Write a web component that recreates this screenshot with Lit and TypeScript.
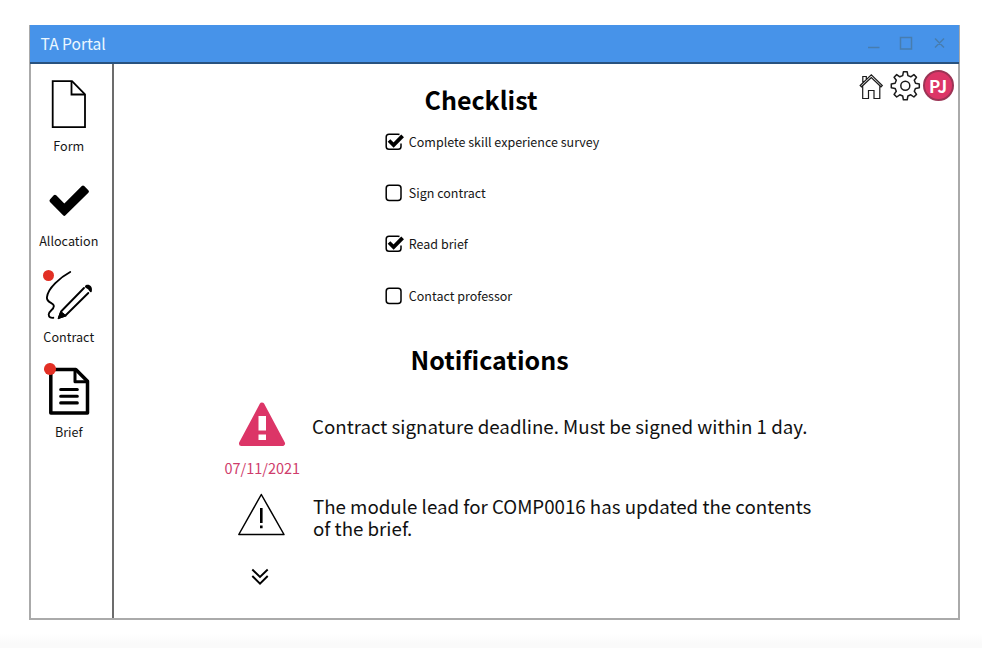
import { LitElement, html, css, svg } from "lit";
import { customElement, property } from "lit/decorators.js";

const icons = {
  form: svg`<g fill="none" stroke="#000" stroke-width="1.8" stroke-linejoin="miter">
    <path d="M11.7 5.1H31L44 18.3V51.2H11.7Z"/><path d="M30.5 5.1V18.5H44"/></g>`,
  allocation: svg`<path d="M10.2 28.7L14 24.500L23.3 33.900L42 15.300L46.200 19.500L23.300 42.100Z" fill="#000" stroke="#000" stroke-width="3.4" stroke-linejoin="round"/>`,
  contract: svg`<g fill="none" stroke="#000" stroke-width="1.9" stroke-linecap="round" stroke-linejoin="round">
    <path d="M29.2 5C20 10 6.5 21 5.9 30.5C5.6 36 13 35.500 12.900 39C12.800 43 7.500 44 7.700 47.500C7.800 50.200 9.500 51 12.300 50.800"/>
    <path d="M43 21L20.500 44L18 50.500L24.500 48.500L47.300 26"/></g>
    <path d="M17 51.800L19.700 44.300L25.200 48.800Z" fill="#000" stroke="#000" stroke-linejoin="round"/>
    <path d="M43.900 19.400C46 16 52.500 18.500 50.700 24.700Q50 25.500 49.100 25.100Q47.500 21.500 44.300 20.500Z" fill="#000"/>`,
  brief: svg`<g fill="none" stroke="#000" stroke-linejoin="round" stroke-linecap="round">
    <path stroke-width="3.500" d="M10.300 6.500H34.800L46.500 18.300V50H9.800V6.500Z"/>
    <path stroke-width="3" d="M34 7V18.700H46.500"/>
    <path stroke-width="3.100" d="M19.700 26.500H36.300M19.700 33.200H36.300M19.700 39.900H36.300"/></g>`,
};

@customElement("nav-item")
class NavItem extends LitElement {
  @property() label = "";
  @property() icon: keyof typeof icons = "form";
  @property() badge = "";
  static styles = css`
    :host { display: flex; flex-direction: column; align-items: center; height: 95.5px; position: relative; }
    svg { width: 56px; height: 56px; flex: none; display: block; }
    .label { font-size: 12.6px; line-height: 20px; margin-top: 3.5px; color: #161616; }
    .dot { position: absolute; width: 11.6px; height: 11.6px; border-radius: 50%; background: #e22f24; }
    .contract { left: 11.8px; top: 2.9px; }
    .brief { left: 13px; top: 0.6px; }
  `;
  render() {
    return html`<svg viewBox="0 0 56 56">${icons[this.icon]}</svg>
      <span class="label">${this.label}</span>
      ${this.badge ? html`<i class="dot ${this.icon}"></i>` : ""}`;
  }
}

@customElement("check-item")
class CheckItem extends LitElement {
  @property({ type: Boolean }) checked = false;
  static styles = css`
    :host { display: flex; align-items: center; height: 51.3px; font-size: 12.5px; line-height: 20px; color: #161616; white-space: nowrap; }
    svg { width: 20px; height: 20px; margin-right: 4.3px; flex: none; }
  `;
  render() {
    return html`<svg viewBox="0 0 20 20" fill="none" stroke="#000">
        ${this.checked
          ? svg`<path stroke-width="1.500" d="M14.500 2.500Q13.900 2.200 13 2.200H4Q1.200 2.200 1.200 5V14.500Q1.200 17.300 4 17.300H13.200Q16 17.300 16 14.500V11.500"/>
              <path stroke-width="3.800" d="M4 8.500L8.600 13L17.600 3.800"/>`
          : svg`<rect x="1.200" y="2.200" width="14.800" height="15.200" rx="3" stroke-width="1.500"/>`}
      </svg><slot></slot>`;
  }
}

@customElement("app-root")
class AppRoot extends LitElement {
  static styles = css`
    :host { display: block; box-sizing: border-box; width: 982px; height: 648px; padding: 25px 22px 0 29px; overflow: hidden;
      background: linear-gradient(#fff 634px, #fafafa 644px); font-family: "Noto Sans CJK SC", "Noto Sans", sans-serif; color: #000; }
    .window { box-sizing: border-box; width: 931px; height: 594.500px; display: flex; flex-direction: column; border: 2px solid #aaa; border-top: 0; }
    .titlebar { box-sizing: border-box; height: 39px; flex: none; display: flex; justify-content: space-between; align-items: center;
      padding: 0 10px 2px 10.500px; margin: 0 -1px; background: #4793e9; border-bottom: 2px solid #28527f; color: #ecf8ff; font-size: 15.600px; line-height: 22px; }
    .controls { width: 84px; height: 22px; }
    .body { flex: 1; display: flex; min-height: 0; }
    nav { box-sizing: border-box; width: 83px; border-right: 2px solid #6c6c6c; padding: 12px 5.500px 0 0; }
    main { flex: 1; display: flex; flex-direction: column; position: relative; }
    h1 { margin: 0; font-size: 25px; line-height: 36px; font-weight: 700; white-space: nowrap; }
    .h-check { padding: 16.500px 0 0 310.500px; }
    .h-notif { padding: 19.500px 0 0 296.500px; }
    .checks { padding-left: 270.500px; height: 205.200px; margin-top: -0.300px; }
    .notes { display: grid; grid-template-columns: 99.500px 1fr; padding-left: 98.500px; }
    .cell { display: flex; flex-direction: column; align-items: center; }
    .msg { font-size: 18.720px; line-height: 21.700px; color: #111; white-space: nowrap; }
    .one { padding: 38px 0 0 0; }
    .two { padding: 17px 0 0 1px; }
    .date { font-size: 14.500px; line-height: 20px; color: #cf3c6c; }
    svg { display: block; }
    .warn { width: 50px; height: 48px; margin: 23.500px 0 10px; }
    .tri { width: 50px; height: 46px; margin-top: 14px; }
    .more { width: 20px; height: 20px; margin: 28px 0 0 136px; }
    .tools { position: absolute; top: 3px; right: 4.500px; display: flex; align-items: center; }
    .tools svg { width: 64px; height: 36px; }
    .avatar { box-sizing: border-box; width: 31px; height: 31px; border-radius: 50%; background: #dc3567; border: 2px solid #9c3455; color: #fff;
      font-weight: 700; font-size: 17px; line-height: 27px; text-align: center; }
  `;
  render() {
    return html`<div class="window">
      <header class="titlebar"><span>TA Portal</span>
        <svg class="controls" viewBox="0 0 84 22" fill="none" stroke="#477daf" stroke-width="1.500">
          <path d="M3 15.500H14.500M35.500 5.500H46.500V17H35.500ZM70 6.500L79 15.500M79 6.500L70 15.500"/></svg>
      </header>
      <div class="body">
        <nav>
          <nav-item icon="form" label="Form"></nav-item>
          <nav-item icon="allocation" label="Allocation"></nav-item>
          <nav-item icon="contract" label="Contract" badge="new"></nav-item>
          <nav-item icon="brief" label="Brief" badge="new"></nav-item>
        </nav>
        <main>
          <div class="tools">
            <svg viewBox="0 0 64 36" fill="none" stroke="#1b1b1b" stroke-width="1.200">
              <path d="M1.200 18.500L12.300 7.800L23.300 18.500L22 19.800L12.300 10.500L2.500 19.800ZM3.700 18.700V31.500H9.500V23.500H15V31.500H20.800V18.700M3.800 16V9.500H7.300V12.500"/>
              <g stroke-width="1.500" stroke-linejoin="round" transform="translate(46.300 18.800)"><circle r="4.500"/>
              <path d="M-1.900-14H1.900L2.600-10.200L5.500-9L8.600-11.200L11.200-8.600L9-5.500L10.200-2.600L14-1.900V1.900L10.200 2.600L9 5.500L11.200 8.600L8.600 11.200L5.500 9L2.600 10.200L1.900 14H-1.900L-2.600 10.200L-5.500 9L-8.600 11.200L-11.200 8.600L-9 5.500L-10.200 2.600L-14 1.900V-1.900L-10.200-2.600L-9-5.500L-11.200-8.600L-8.600-11.200L-5.500-9L-2.600-10.200Z"/></g>
            </svg>
            <div class="avatar">PJ</div>
          </div>
          <h1 class="h-check">Checklist</h1>
          <div class="checks">
            <check-item checked>Complete skill experience survey</check-item>
            <check-item>Sign contract</check-item>
            <check-item checked>Read brief</check-item>
            <check-item>Contact professor</check-item>
          </div>
          <h1 class="h-notif">Notifications</h1>
          <div class="notes">
            <div class="cell">
              <svg class="warn" viewBox="0 0 50 48"><path d="M25 5L45.500 43.500H4.500Z" fill="#dc3567" stroke="#dc3567" stroke-width="5" stroke-linejoin="round"/>
                <path d="M21.500 16H29V30.500H21.500ZM21.500 34.500H29V40H21.500Z" fill="#fff"/></svg>
              <span class="date">07/11/2021</span>
            </div>
            <div class="msg one">Contract signature deadline. Must be signed within 1 day.</div>
            <div class="cell">
              <svg class="tri" viewBox="0 0 50 46" fill="none" stroke="#000" stroke-width="1.500" stroke-linejoin="round"><path d="M24.300 2.500L47 42.500H1.800Z"/>
                <path stroke-width="2.600" d="M24.300 16V31M24.300 33.500V36.300"/></svg>
            </div>
            <div class="msg two">The module lead for COMP0016 has updated the contents<br>of the brief.</div>
          </div>
          <svg class="more" viewBox="0 0 20 20" fill="none" stroke="#000" stroke-width="1.900"><path d="M2.300 2.500L10 10L17.700 2.500M2.300 9L10 16.700L17.700 9"/></svg>
        </main>
      </div>
    </div>`;
  }
}
